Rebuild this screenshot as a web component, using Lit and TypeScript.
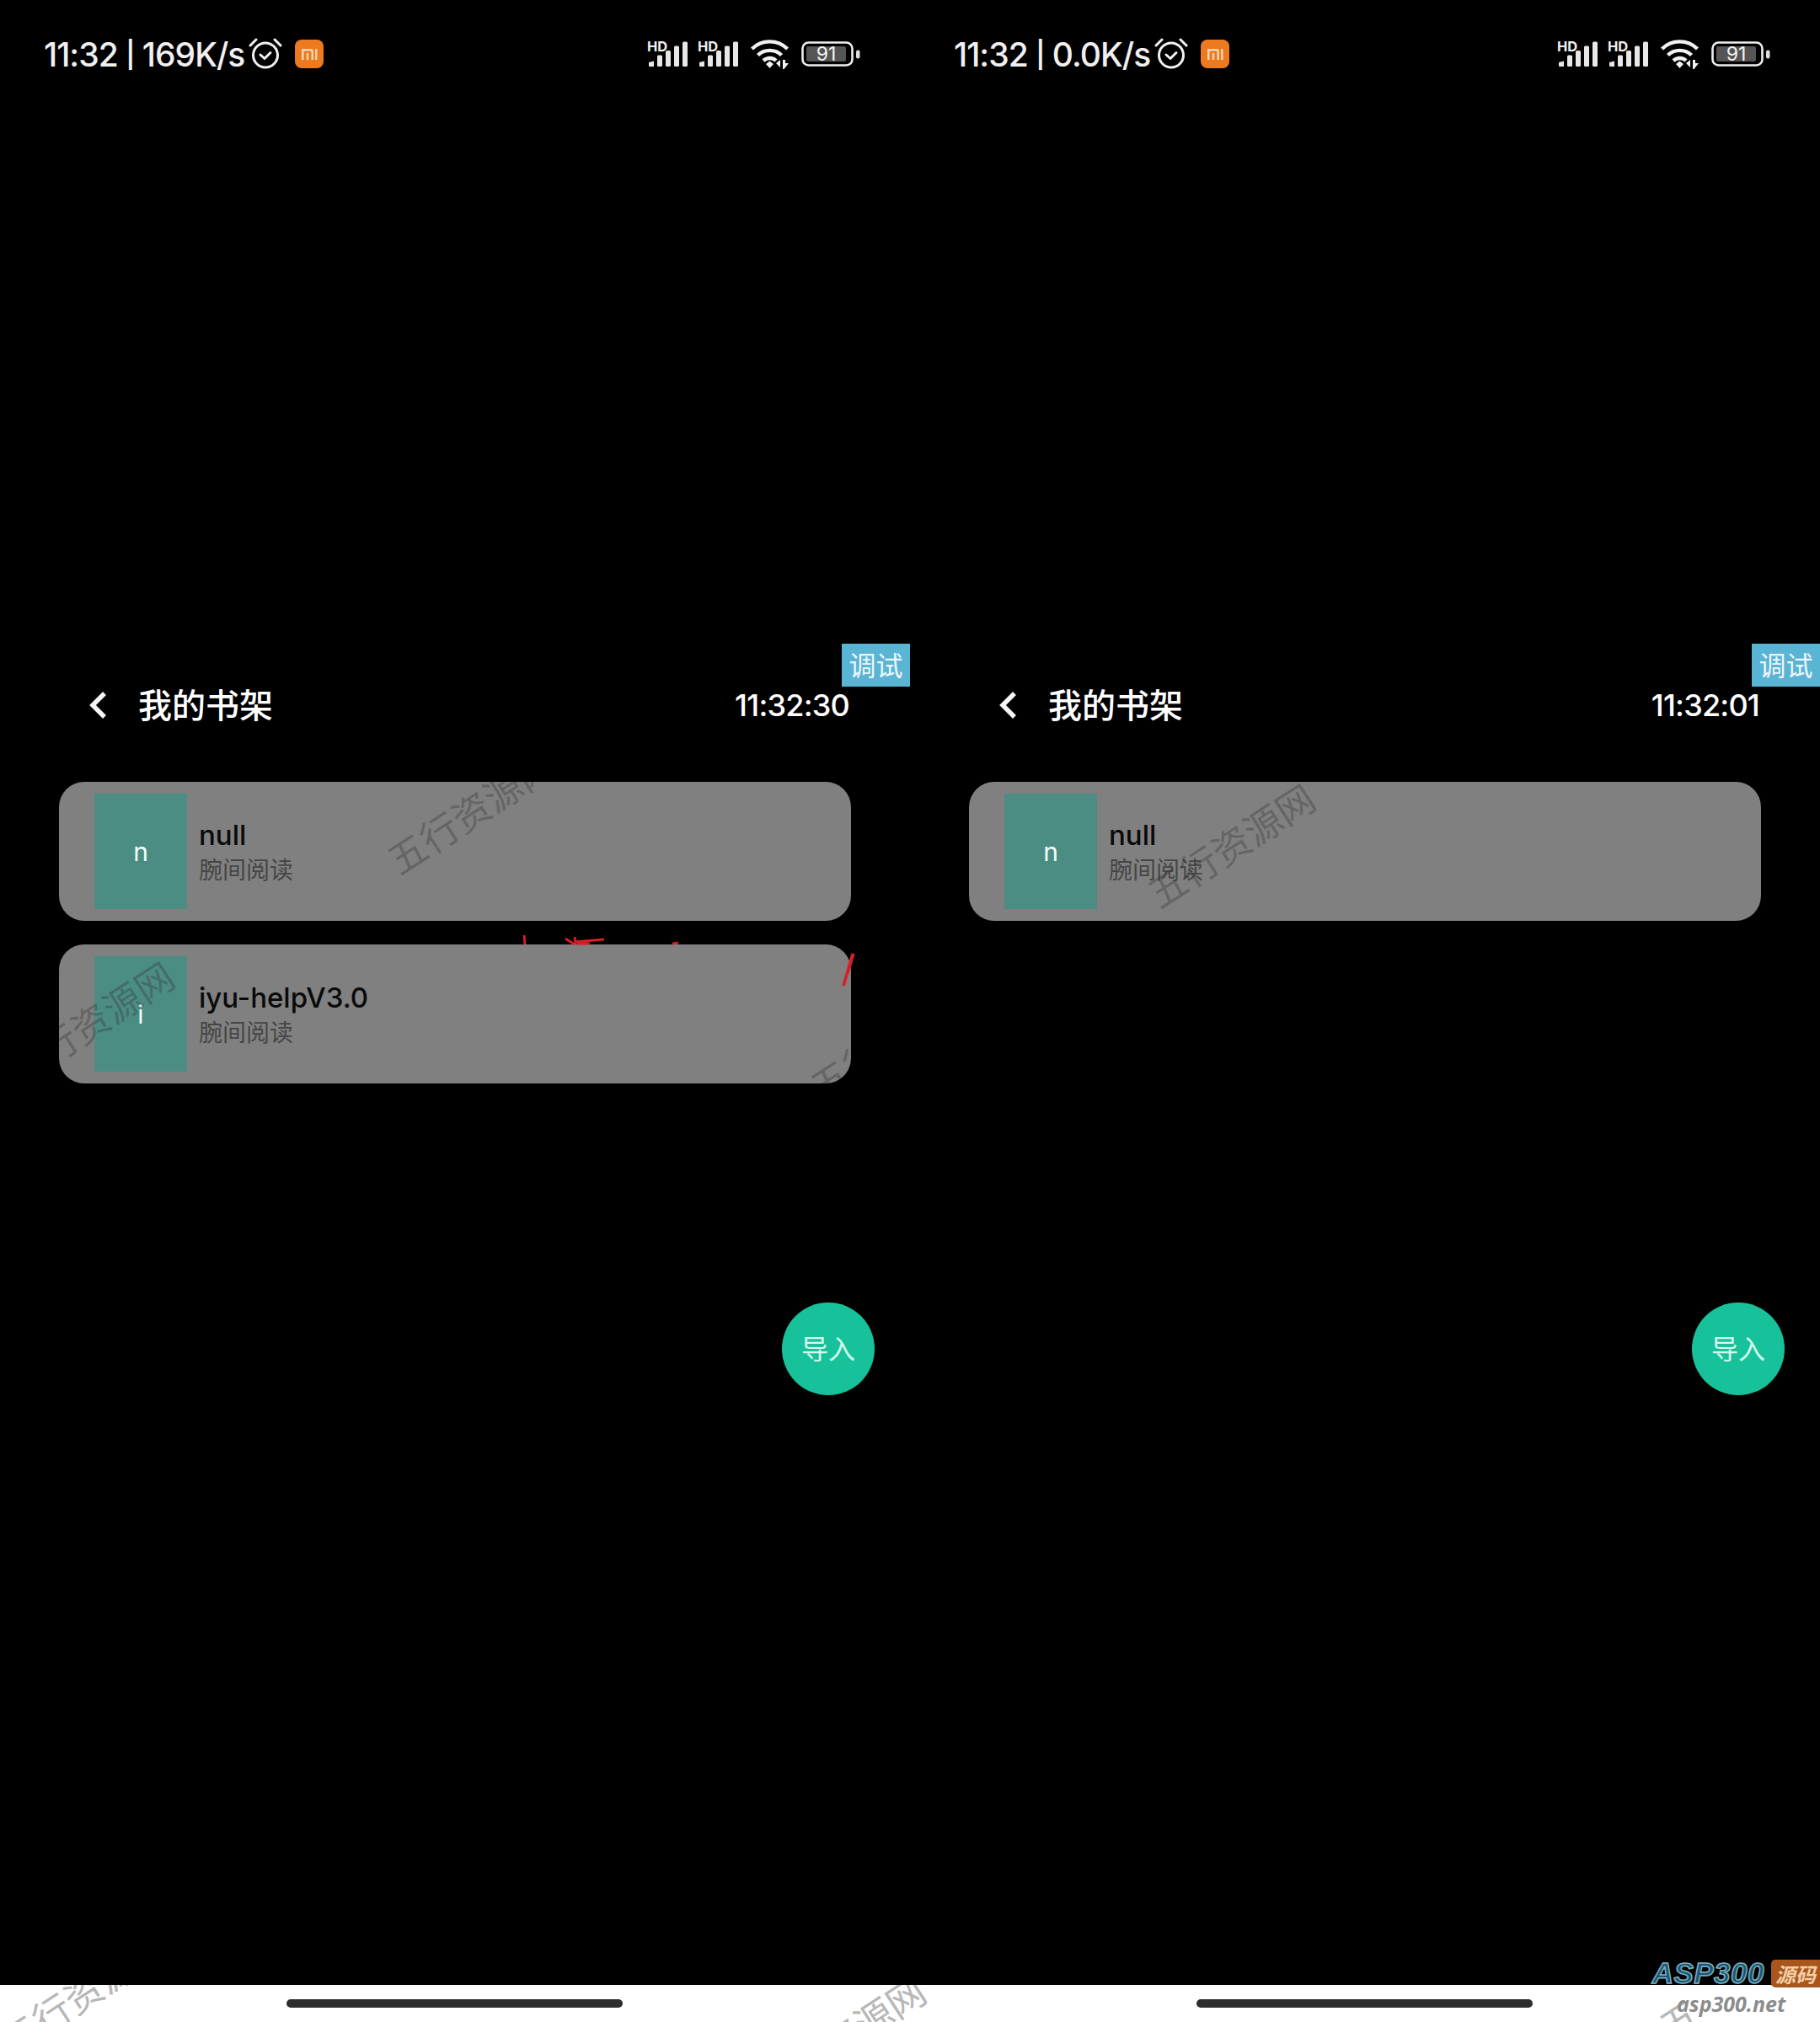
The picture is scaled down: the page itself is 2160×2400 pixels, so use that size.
import { LitElement, html, css, svg } from "lit";
import { customElement } from "lit/decorators.js";

const signal = svg`
  <svg class="signal" viewBox="0 0 50 30" width="50" height="30">
    <text x="0" y="12" font-family="Inter, 'Liberation Sans', sans-serif" font-weight="700" font-size="16.500" fill="#f0f0f0">HD</text>
    <path d="M2 25 L8 23.500 V30 H3 Q2 30 2 29Z" fill="#e8e8e8"/>
    <rect x="12" y="16.500" width="6" height="13.500" rx="1.500" fill="#e8e8e8"/>
    <rect x="22" y="11" width="6" height="19" rx="1.500" fill="#e8e8e8"/>
    <rect x="32" y="5.500" width="6" height="24.500" rx="1.500" fill="#e8e8e8"/>
    <rect x="42" y="0.500" width="6" height="29.500" rx="1.500" fill="#e8e8e8"/>
  </svg>`;

const wifi = svg`
  <svg class="wifi" viewBox="0 0 48 38" width="48" height="38">
    <g fill="none" stroke="#f2f2f2" stroke-width="4.400">
      <path d="M2.500 13 C14 1.500 33 1.500 44.500 13"/>
      <path d="M9.500 20.500 C17 13 30 13 37.500 20.500"/>
      <path d="M16 27 C20.500 23 27 23 31 27"/>
    </g>
    <path d="M19 31 L23.500 27.500 L28 31 L23.500 36Z" fill="#f2f2f2"/>
    <path d="M31 30 L36 26 V35Z M39 26 H42 V30 H46 L40.500 37 H39Z" fill="#f2f2f2"/>
  </svg>`;

const battery = svg`
  <svg class="battery" viewBox="0 0 70 30" width="70" height="30">
    <rect x="1.500" y="1.500" width="59" height="27" rx="7" fill="none" stroke="#eeeeee" stroke-width="2.600"/>
    <rect x="6" y="6" width="47" height="18" rx="2" fill="#555555"/>
    <text x="29.500" y="22.500" text-anchor="middle" font-family="Inter, 'Liberation Sans', sans-serif" font-size="23" fill="#f4f4f4">91</text>
    <rect x="65" y="10.500" width="4.500" height="10" rx="2" fill="#dddddd"/>
  </svg>`;

const alarm = svg`
  <svg class="alarm" viewBox="0 0 40 38" width="40" height="38">
    <g fill="none" stroke="#f2f2f2" stroke-width="3" stroke-linecap="round" stroke-linejoin="round">
      <circle cx="20" cy="21.500" r="14.500"/>
      <path d="M14 21 L19 25.500 L26 18.500"/>
      <path d="M2 10 L9 3"/>
      <path d="M38 10 L31 3"/>
    </g>
  </svg>`;

const mi = svg`
  <svg class="mi" viewBox="0 0 34 34" width="34" height="34">
    <rect width="34" height="34" rx="8" fill="#ee7a1f"/>
    <path d="M8 11 H19 Q22 11 22 14 V24 H19.500 V14.500 Q19.500 13.500 18.500 13.500 H10.500 V24 H8Z M13.800 16 H16.200 V24 H13.800Z M24 11 H26.500 V24 H24Z" fill="#f7d5ae"/>
  </svg>`;

const chevron = svg`
  <svg class="chev" viewBox="0 0 24 34" width="24" height="34">
    <path d="M20 3 L6 17 L20 31" fill="none" stroke="#f5f5f5" stroke-width="5.500" stroke-linejoin="miter"/>
  </svg>`;

const redMarks = svg`
  <svg viewBox="0 0 460 70" width="460" height="70">
    <g fill="none" stroke="#d81e26" stroke-width="2.800">
      <path d="M62 2 L63 13"/>
      <path d="M111 6 L122 13 M122 4 L123 13 M122 10 L157 7 M125 12 L140 12"/>
      <path d="M238 12 L245 11"/>
      <path d="M452 24 L441 62 M453 24 L446 47" stroke-width="3.400"/>
    </g>
  </svg>`;

interface Wm { x: number; y: number; text?: string }
interface Book { title: string; wm: Wm[] }
interface Panel { clock: string; speed: string; stamp: string; books: Book[]; red: boolean }

const PANELS: Panel[] = [
  {
    clock: "11:32", speed: "169K/s", stamp: "11:32:30", red: true,
    books: [
      { title: "null", wm: [{ x: 488, y: 34 }] },
      { title: "iyu-helpV3.0", wm: [{ x: 36, y: 92 }, { x: 990, y: 110 }] },
    ],
  },
  {
    clock: "11:32", speed: "0.0K/s", stamp: "11:32:01", red: false,
    books: [{ title: "null", wm: [{ x: 310, y: 74 }] }],
  },
];

@customElement("app-root")
export class AppRoot extends LitElement {
  static styles = css`
    :host {
      position: relative;
      display: grid;
      grid-template-columns: 1080px 1080px;
      grid-template-rows: 2356px 44px;
      width: 2160px;
      height: 2400px;
      background: #000;
      overflow: hidden;
      font-family: Inter, "Noto Sans CJK SC", sans-serif;
    }
    .panel { position: relative; display: flex; flex-direction: column; background: #000; }
    .status {
      height: 128px; display: flex; align-items: center;
      padding: 0 59px 0 52px; color: #f0f0f0;
    }
    .clock { font-size: 39px; font-weight: 500; letter-spacing: -1px; white-space: pre; line-height: 1; display: flex; align-items: center; }
    .pipe { font-size: 31px; font-weight: 600; margin: 0 9.500px; }
    .alarm { margin-left: 5px; margin-top: -2px; }
    .mi { margin-left: 15px; }
    .spacer { flex: 1; }
    .signal { margin-right: 10px; overflow: visible; }
    .wifi { margin-left: 2px; margin-right: 13px; }
    .header {
      margin-top: 672px; height: 72px; display: flex; align-items: center;
      padding: 0 72px 0 104px; color: #fff;
    }
    .chev { margin-right: 36px; margin-top: 2px; flex: none; }
    .title { font-size: 40px; font-weight: 500; font-family: "Noto Sans CJK SC", sans-serif; margin-top: -3px; }
    .stamp { font-size: 36px; font-weight: 500; letter-spacing: -0.800px; margin-left: auto; margin-top: 1px; }
    .debug {
      position: absolute; right: 0; top: 764px; width: 81px; height: 51px;
      background: #5ab4d4; color: #eef6fa; font-size: 32px; padding-bottom: 3px; box-sizing: border-box;
      display: flex; align-items: center; justify-content: center;
      font-family: "Noto Sans CJK SC", sans-serif;
    }
    .list { margin: 56px 70px 0; display: flex; flex-direction: column; gap: 28px; }
    .card {
      position: relative; overflow: hidden; height: 165px; border-radius: 30px;
      background: #808080; display: flex; align-items: center; padding-left: 42px;
    }
    .cover {
      width: 110px; height: 137px; background: #4c8d83; color: #f2fffd;
      display: flex; align-items: center; justify-content: center; font-size: 30px; flex: none;
    }
    .info { margin-left: 14px; display: flex; flex-direction: column; margin-top: -3px; }
    .name { font-size: 33px; font-weight: 500; line-height: 44px; color: #0a0a0a; }
    .sub { font-size: 28px; line-height: 36px; color: #454545; font-family: "Noto Sans CJK SC", sans-serif; }
    .wm {
      position: absolute; transform: translate(-50%, -50%) rotate(-33deg);
      font-size: 45px; line-height: 1; white-space: nowrap; color: rgba(50, 50, 50, 0.34);
      font-family: "Noto Sans CJK SC", sans-serif; font-weight: 400; pointer-events: none;
    }
    .marks { position: absolute; left: 560px; top: 1108px; line-height: 0; }
    .fab {
      position: absolute; left: 928px; top: 1546px; width: 110px; height: 110px; border-radius: 50%;
      background: #17c29b; color: #d8f8ee; display: flex; align-items: center; justify-content: center;
      font-size: 32px; padding-bottom: 4px; box-sizing: border-box; font-family: "Noto Sans CJK SC", sans-serif;
    }
    .strip {
      grid-column: 1 / 3; position: relative; overflow: hidden; background: #fff;
      display: grid; grid-template-columns: 1080px 1080px;
    }
    .slot { display: flex; justify-content: center; padding-top: 17px; }
    .home { width: 399px; height: 10px; border-radius: 5px; background: #2e2e2e; margin-left: -2px; }
    .strip .wm { color: rgba(120, 120, 120, 0.55); }
    .net {
      position: absolute; left: 1990px; top: 6px; font-size: 25px; line-height: 32px; font-weight: 700;
      font-style: italic; color: #8c8c8c; font-family: "Open Sans", sans-serif;
    }
    .brand {
      position: absolute; left: 0; right: 0; top: 2325px; height: 34px;
      display: flex; align-items: center; justify-content: flex-end; pointer-events: none;
    }
    .asp {
      font-family: "Liberation Sans", sans-serif; font-weight: 700; font-style: italic; font-size: 35px;
      color: #14597c; -webkit-text-stroke: 1.500px #86aebb; letter-spacing: 0.500px; line-height: 34px; margin-right: 8px;
    }
    .src {
      width: 58px; height: 33px; border-radius: 5px 0 0 5px; background: #a8561c; color: #f3cfa8;
      font-size: 24px; line-height: 33px; text-align: center; font-style: italic; font-weight: 700;
      font-family: "Noto Sans CJK SC", sans-serif;
    }
  `;

  private wms(list: Wm[]) {
    return list.map(
      (w) => html`<span class="wm" style="left:${w.x}px;top:${w.y}px">${w.text ?? "五行资源网"}</span>`
    );
  }

  private panel(p: Panel) {
    return html`
      <section class="panel">
        <div class="status">
          <span class="clock">${p.clock}<span class="pipe">|</span>${p.speed}</span>
          ${alarm}${mi}
          <span class="spacer"></span>
          ${signal}${signal}${wifi}${battery}
        </div>
        <div class="header">
          ${chevron}
          <span class="title">我的书架</span>
          <span class="stamp">${p.stamp}</span>
        </div>
        <span class="debug">调试</span>
        <div class="list">
          ${p.books.map(
            (b) => html`
              <article class="card">
                <div class="cover">${b.title[0]}</div>
                <div class="info">
                  <span class="name">${b.title}</span>
                  <span class="sub">腕间阅读</span>
                </div>
                ${this.wms(b.wm)}
              </article>
            `
          )}
        </div>
        ${p.red ? html`<div class="marks">${redMarks}</div>` : ""}
        <div class="fab">导入</div>
      </section>
    `;
  }

  render() {
    return html`
      ${this.panel(PANELS[0])}
      ${this.panel(PANELS[1])}
      <div class="strip">
        <div class="slot"><span class="home"></span></div>
        <div class="slot"><span class="home"></span></div>
        ${this.wms([{ x: 98, y: 8 }, { x: 998, y: 62 }, { x: 1992, y: 40, text: "五" }])}
        <span class="net">asp300.net</span>
      </div>
      <div class="brand">
        <span class="asp">ASP300</span>
        <span class="src">源码</span>
      </div>
    `;
  }
}
